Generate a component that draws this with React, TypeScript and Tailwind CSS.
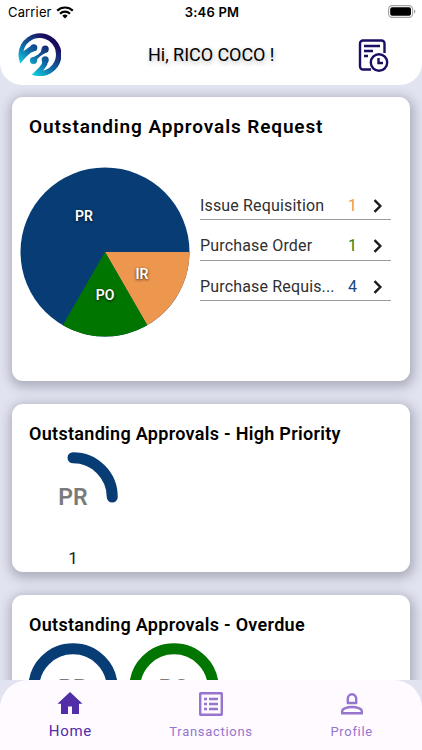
import type { ReactNode } from 'react'
import { clsx } from 'clsx'

const NAVY = '#083c75'
const GREEN = '#007500'
const ORANGE = '#ed964e'

const requests = [
  { label: 'Issue Requisition', count: 1, color: 'text-[#ed964e]' },
  { label: 'Purchase Order', count: 1, color: 'text-[#1c851c]' },
  { label: 'Purchase Requis...', count: 4, color: 'text-[#174783]' },
]

function StatusBar() {
  return (
    <div className="grid h-6 grid-cols-3 items-center pl-2 pr-1.5 font-['Inter',sans-serif] text-[13px] leading-none text-black">
      <div className="flex items-center gap-1">
        <span className="tracking-[0.15px]">Carrier</span>
        <svg width="18" height="13" viewBox="0 0 18 13" fill="none" stroke="black" strokeWidth="2.2">
          <path d="M1.2 4.6a11.3 11.3 0 0 1 15.6 0" />
          <path d="M4 7.7a7.2 7.2 0 0 1 10 0" />
          <path d="M9 12.5 6.3 9.8a3.9 3.9 0 0 1 5.4 0z" fill="black" stroke="none" />
        </svg>
      </div>
      <span className="text-center font-semibold tracking-[0.2px]">3:46 PM</span>
      <svg className="-mt-0.5 justify-self-end" width="28" height="13" viewBox="0 0 28 13">
        <rect x="0.6" y="0.6" width="24" height="11.8" rx="3.6" fill="none" stroke="#a3a3a3" strokeWidth="1.1" />
        <rect x="2.2" y="2.2" width="20.8" height="8.6" rx="2" fill="black" />
        <path d="M26 4.5v4c.8-.3 1.4-1.1 1.4-2s-.6-1.7-1.4-2z" fill="#a3a3a3" />
      </svg>
    </div>
  )
}

function Logo() {
  return (
    <svg width="43" height="43" viewBox="0 0 128 128">
      <defs>
        <linearGradient id="logo" x1="20" y1="112" x2="96" y2="20" gradientUnits="userSpaceOnUse">
          <stop offset="0" stopColor="#13e0ec" />
          <stop offset="0.45" stopColor="#0f6aa6" />
          <stop offset="1" stopColor="#1b0a5c" />
        </linearGradient>
      </defs>
      <g fill="url(#logo)">
        {/* Outer ring with its two tails */}
        <path d="M7 91A64 64 0 1 1 41 124L64 101Q73 93 73 82L89 84Q89 95 80 105L74 112A49 49 0 1 0 16 54L38 39L52 51Q48 54 38 59Q25 69 7 91Z" />
        {/* Nodes */}
        <circle cx="47" cy="44" r="10.5" />
        <circle cx="81" cy="48" r="10.5" />
        <circle cx="46" cy="82" r="10.5" />
        <circle cx="81" cy="80" r="10.5" />
        <path d="M71 47Q70 57 60 64Q51 70 41 74L54 86Q56 76 66 69Q76 62 86 57Z" />
      </g>
    </svg>
  )
}

function HistoryIcon() {
  return (
    <svg className="mt-0.5" width="31" height="34" viewBox="0 0 31 34" fill="none" stroke="#1b0e63" strokeWidth="2.4">
      <path d="M13 30.5H5a3 3 0 0 1-3-3v-23a3 3 0 0 1 3-3h18.5a3 3 0 0 1 3 3V14" />
      <path d="M6 7h16M6 12h9M6 17h4" />
      <circle cx="21" cy="23.5" r="8.2" />
      <path d="M20.5 19v5H25" />
    </svg>
  )
}

function PieChart() {
  return (
    <svg
      width="170"
      height="170"
      viewBox="-85 -85 170 170"
      className="shrink-0 font-['Roboto',sans-serif] text-[14px] font-semibold"
    >
      <circle r="84.5" fill={NAVY} />
      <path d="M0 0H84.5A84.5 84.5 0 0 1 42.25 73.18Z" fill={ORANGE} />
      <path d="M0 0L42.25 73.18A84.5 84.5 0 0 1 -42.25 73.18Z" fill={GREEN} />
      <g fill="white" textAnchor="middle" className="[text-shadow:0_1px_3px_rgba(0,0,0,0.8)]">
        <text x="-21" y="-31">PR</text>
        <text x="37" y="27">IR</text>
        <text x="0" y="48">PO</text>
      </g>
    </svg>
  )
}

function Chevron() {
  return (
    <svg width="10" height="14" viewBox="0 0 10 14" fill="none" stroke="#1b1b1b" strokeWidth="2.4">
      <path d="M1.5 1.2 7.3 7l-5.8 5.8" />
    </svg>
  )
}

function Card({ title, className, titleClass, children }: {
  title: string
  className?: string
  titleClass?: string
  children: ReactNode
}) {
  return (
    <section className={clsx('shrink-0 rounded-[11px] bg-white shadow-[1px_3px_11px_3px_rgba(60,60,75,0.32)]', className)}>
      <h2 className={clsx('pl-[17.5px] font-semibold text-black', titleClass)}>{title}</h2>
      {children}
    </section>
  )
}

function Ring({ label, color, full }: { label: string; color: string; full?: boolean }) {
  return (
    <svg width="90" height="90" viewBox="-45 -45 90 90" className="shrink-0 text-[23px] font-semibold">
      {full ? (
        <circle r="39.25" fill="none" stroke={color} strokeWidth="11" />
      ) : (
        <path d="M0 -39.25A39.25 39.25 0 0 1 39.25 0" fill="none" stroke={color} strokeWidth="11" strokeLinecap="round" />
      )}
      <text x="0" y="8" textAnchor="middle" fill="#7b7b7b">{label}</text>
    </svg>
  )
}

function HomeIcon() {
  return (
    <svg width="26" height="23" viewBox="0 0 26 23" fill="#512da8">
      <path d="M13 0 .5 11.7H4V22h7v-7.5h4V22h7V11.7h3.5z" />
    </svg>
  )
}

function TransactionsIcon() {
  return (
    <svg width="24" height="24" viewBox="0 0 24 24" fill="none" stroke="#9575cd" strokeWidth="2.4">
      <rect x="1.2" y="1.2" width="21.6" height="21.6" rx="0.5" />
      <path d="M5 7h3M5 12h3M5 17h3M10 7h9M10 12h9M10 17h9" />
    </svg>
  )
}

function ProfileIcon() {
  return (
    <svg width="22" height="22" viewBox="0 0 22 22" fill="none" stroke="#9575cd" strokeWidth="2.4">
      <path d="M6.8 10V5.5a4.2 4.2 0 0 1 8.4 0V10z" strokeLinejoin="round" />
      <path d="M1.2 20.3V18c0-2.500 5-4 9.800-4s9.800 1.500 9.800 4v2.300z" />
    </svg>
  )
}

export default function App() {
  return (
    <div className="flex h-[750px] w-[422px] flex-col overflow-hidden bg-[#e2e3f1] font-['Roboto',sans-serif]">
      <header className="h-[85px] shrink-0 rounded-b-[22px] bg-white">
        <StatusBar />
        <div className="flex h-[61px] items-center justify-between pl-[17.5px] pr-[33px]">
          <Logo />
          <p className="pl-1 text-[18px] tracking-[-0.05px] text-black [text-shadow:1px_2px_5px_rgba(0,0,0,0.3)]">Hi, RICO COCO !</p>
          <HistoryIcon />
        </div>
      </header>

      <main className="flex min-h-0 flex-1 flex-col gap-[23px] overflow-hidden pl-[11.5px] pr-3 pt-3">
        <Card title="Outstanding Approvals Request" className="h-[284px]" titleClass="pt-[17px] text-[19px] leading-[26px] tracking-[0.88px]">
          <div className="flex pl-[8.5px] pt-[27px]">
            <PieChart />
            <ul className="ml-[10px] mt-[16px] w-[191px]">
              {requests.map((item) => (
                <li key={item.label} className="mb-[3.5px] flex h-[37px] items-center border-b border-[#9b9b9b] pt-[9px] text-[16px]">
                  <span className="w-[139.5px] whitespace-nowrap tracking-[0.16px] text-[#303030]">{item.label}</span>
                  <span className={clsx('w-[26px] text-center', item.color)}>{item.count}</span>
                  <span className="pl-[7px]">
                    <Chevron />
                  </span>
                </li>
              ))}
            </ul>
          </div>
        </Card>

        <Card title="Outstanding Approvals - High Priority" className="h-[168px]" titleClass="pt-[17px] text-[18px] leading-[26px] tracking-[0.3px]">
          <div className="ml-[16.5px] flex w-[90px] flex-col items-center pt-[5px]">
            <Ring label="PR" color={NAVY} />
            <span className="mt-1 text-[17px] leading-6 text-[#222]">1</span>
          </div>
        </Card>

        <Card title="Outstanding Approvals - Overdue" className="h-[168px]" titleClass="pt-[17px] text-[18px] leading-[26px] tracking-[0.3px]">
          <div className="flex gap-[11px] pl-[16.5px] pt-[5px]">
            <Ring label="PR" color={NAVY} full />
            <Ring label="PO" color={GREEN} full />
          </div>
        </Card>
      </main>

      <nav className="z-10 grid h-[70px] shrink-0 grid-cols-3 rounded-t-[28px] bg-[#fefaff] text-[13px] tracking-[0.7px] text-[#9575cd]">
        <div className="flex flex-col items-center pt-3">
          <HomeIcon />
          <span className="mt-[5px] text-[15px] leading-[22px] text-[#512da8]">Home</span>
        </div>
        <div className="flex flex-col items-center pt-3">
          <TransactionsIcon />
          <span className="mt-[6px] leading-[20px]">Transactions</span>
        </div>
        <div className="flex flex-col items-center pt-[13px]">
          <ProfileIcon />
          <span className="mt-[7px] leading-[20px]">Profile</span>
        </div>
      </nav>
    </div>
  )
}
